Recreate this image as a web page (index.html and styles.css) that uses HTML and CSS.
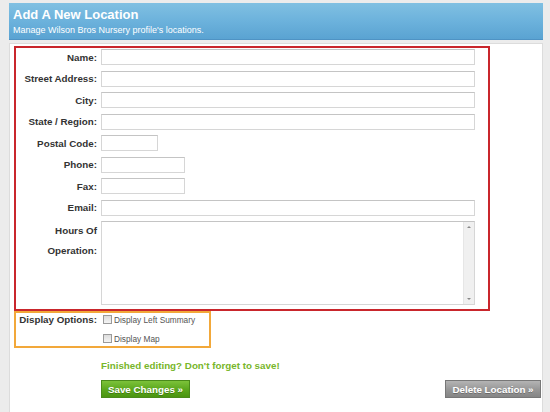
FILE: index.html
```html
<!DOCTYPE html>
<html>
<head>
<meta charset="utf-8">
<link rel="stylesheet" href="styles.css">
</head>
<body>
<div class="wrap">
  <div class="header">
    <div class="title">Add A New Location</div>
    <div class="subtitle">Manage Wilson Bros Nursery profile's locations.</div>
  </div>
  <div class="panel">
    <div class="redbox">
      <div class="row"><label class="lbl">Name:</label><span class="inp full"></span></div>
      <div class="row"><label class="lbl">Street Address:</label><span class="inp full"></span></div>
      <div class="row"><label class="lbl">City:</label><span class="inp full"></span></div>
      <div class="row"><label class="lbl">State / Region:</label><span class="inp full"></span></div>
      <div class="row"><label class="lbl">Postal Code:</label><span class="inp postal"></span></div>
      <div class="row"><label class="lbl">Phone:</label><span class="inp phone"></span></div>
      <div class="row"><label class="lbl">Fax:</label><span class="inp phone"></span></div>
      <div class="row"><label class="lbl">Email:</label><span class="inp full"></span></div>
      <div class="row tall">
        <label class="lbl multi">Hours Of<br>Operation:</label>
        <div class="textarea">
          <div class="ta-space"></div>
          <div class="scrollbar">
            <span class="arrow up"></span>
            <span class="arrow down"></span>
          </div>
        </div>
      </div>
    </div>
    <div class="optbox">
      <label class="lbl opt">Display Options:</label>
      <div class="checks">
        <div class="check"><span class="cb"></span><span class="cbtext">Display Left Summary</span></div>
        <div class="check"><span class="cb"></span><span class="cbtext">Display Map</span></div>
      </div>
    </div>
    <div class="save-note">Finished editing? Don't forget to save!</div>
    <div class="actions">
      <span class="btn save">Save Changes »</span>
      <span class="btn del">Delete Location »</span>
    </div>
  </div>
</div>
</body>
</html>
```

FILE: styles.css
```css
html, body {
  margin: 0;
  padding: 0;
}
body {
  background: #ececec;
  font-family: "Liberation Sans", Arial, sans-serif;
  width: 550px;
  height: 412px;
  overflow: hidden;
  white-space: nowrap;
}
.wrap {
  margin-left: 9px;
  width: 534px;
  padding-top: 3px;
}
.header {
  height: 37px;
  box-sizing: border-box;
  background: linear-gradient(to bottom, #80c0e2 0%, #6cb2dc 50%, #5aa3d2 100%);
  border-bottom: 1px solid #4f93c4;
  padding: 4px 0 0 4px;
  color: #fff;
}
.title {
  font-weight: bold;
  font-size: 13px;
  line-height: 16px;
}
.subtitle {
  font-size: 9px;
  line-height: 12px;
  margin-top: 1px;
}
.panel {
  margin-top: 3px;
  background: #fff;
  border: 1px solid #dcdcdc;
  border-bottom: none;
  padding: 2px 1px 0 4px;
  height: 380px;
}
.redbox {
  width: 476px;
  box-sizing: border-box;
  border: 2px solid #c9262c;
  padding: 1px 0 4px 0;
  display: flex;
  flex-direction: column;
  gap: 5.5px;
}
.row {
  display: flex;
  align-items: center;
  height: 16px;
}
.row.tall {
  height: 84px;
  align-items: flex-start;
}
.lbl {
  width: 81px;
  flex: none;
  text-align: right;
  font-weight: bold;
  font-size: 9.8px;
  color: #333;
  padding-right: 4px;
  box-sizing: content-box;
}
.lbl.multi {
  line-height: 20px;
}
.inp {
  display: block;
  height: 16px;
  box-sizing: border-box;
  border: 1px solid #d6d6d6;
  border-top-color: #c4c4c4;
  background: #fff;
}
.inp.full { width: 374px; }
.inp.postal { width: 57px; }
.inp.phone { width: 84px; }
.textarea {
  width: 374px;
  height: 84px;
  box-sizing: border-box;
  border: 1px solid #d6d6d6;
  border-top-color: #c4c4c4;
  display: flex;
}
.ta-space { flex: 1; }
.scrollbar {
  width: 10px;
  background: #f0f0f0;
  border-left: 1px solid #e6e6e6;
  display: flex;
  flex-direction: column;
  justify-content: space-between;
  align-items: center;
  padding: 4px 0 4px 0;
}
.arrow {
  width: 0;
  height: 0;
  border-left: 2px solid transparent;
  border-right: 2px solid transparent;
}
.arrow.up { border-bottom: 2px solid #888; }
.arrow.down { border-top: 2px solid #888; }
.optbox {
  width: 197px;
  height: 37px;
  box-sizing: border-box;
  border: 2px solid #f2a83a;
  display: flex;
  align-items: flex-start;
}
.lbl.opt {
  width: 81px;
  line-height: 13px;
  padding-right: 4px;
}
.checks {
  display: flex;
  flex-direction: column;
  gap: 6px;
  margin-left: 2px;
}
.check {
  display: flex;
  align-items: center;
  height: 13px;
}
.cb {
  width: 9px;
  height: 9px;
  box-sizing: border-box;
  border: 1px solid #9a9a9a;
  background: linear-gradient(to bottom, #dcdcdc, #f4f4f4);
  margin-right: 2px;
}
.cbtext {
  font-size: 8.3px;
  color: #555;
}
.save-note {
  margin: 11px 0 0 87px;
  color: #78b62a;
  font-weight: bold;
  font-size: 9.8px;
  line-height: 14px;
}
.actions {
  display: flex;
  justify-content: space-between;
  margin: 7px 0 0 87px;
}
.btn {
  display: flex;
  align-items: center;
  justify-content: center;
  height: 18px;
  box-sizing: border-box;
  color: #fff;
  font-weight: bold;
  font-size: 9.8px;
  text-shadow: 0 1px 0 rgba(0,0,0,0.25);
}
.btn.save {
  width: 89px;
  background: linear-gradient(to bottom, #7cc23a 0%, #5aa61c 55%, #4b9410 100%);
  border: 1px solid #4a8a1a;
}
.btn.del {
  width: 96px;
  background: linear-gradient(to bottom, #b4b4b4 0%, #969696 55%, #858585 100%);
  border: 1px solid #777;
}
```
